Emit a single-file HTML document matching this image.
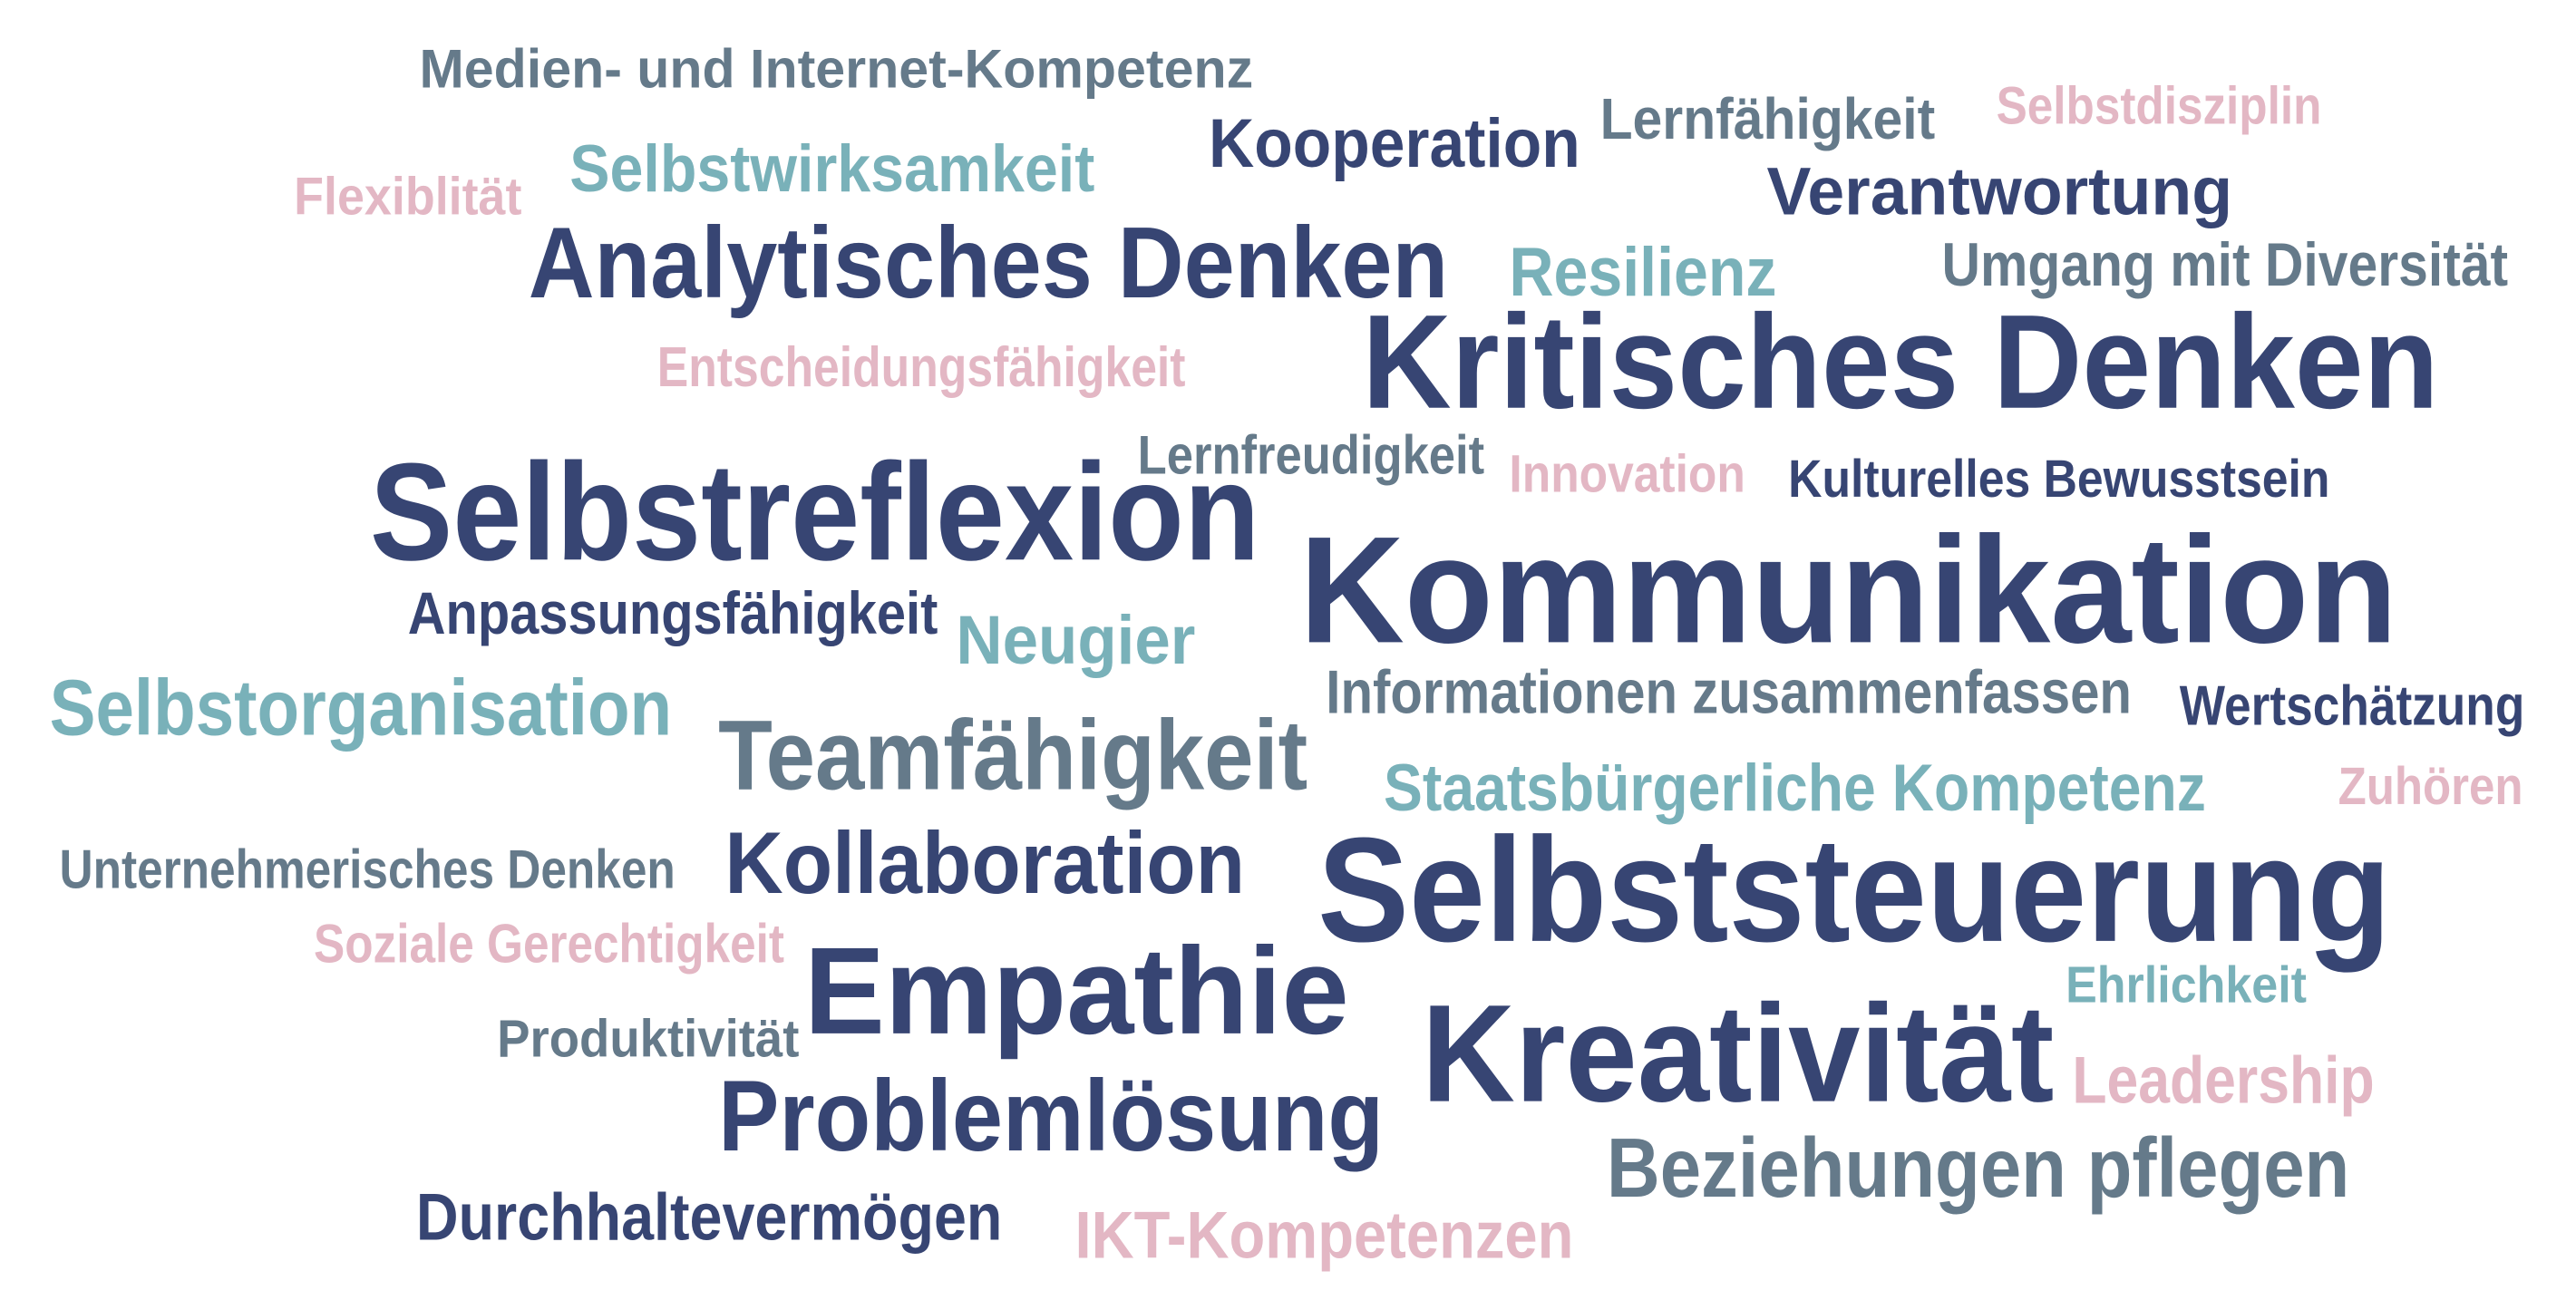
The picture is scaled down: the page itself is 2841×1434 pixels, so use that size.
<!DOCTYPE html>
<html><head><meta charset="utf-8"><style>
html,body{margin:0;padding:0;background:#fff;width:2841px;height:1434px;overflow:hidden}
svg{display:block}
text{font-family:"Liberation Sans",sans-serif;font-weight:bold}
.n{fill:#374573}.s{fill:#657a8a}.t{fill:#79b1b9}.p{fill:#e3b7c4}
</style></head><body>
<svg width="2841" height="1434" viewBox="0 0 1560.1 787.5" preserveAspectRatio="none" xmlns="http://www.w3.org/2000/svg">
<text class="s" x="254" y="53" font-size="33" textLength="505" lengthAdjust="spacingAndGlyphs">Medien- und Internet-Kompetenz</text>
<text class="n" x="732" y="101" font-size="42" textLength="225" lengthAdjust="spacingAndGlyphs">Kooperation</text>
<text class="s" x="969" y="84" font-size="35" textLength="203" lengthAdjust="spacingAndGlyphs">Lernfähigkeit</text>
<text class="p" x="1209" y="75" font-size="32" textLength="197" lengthAdjust="spacingAndGlyphs">Selbstdisziplin</text>
<text class="p" x="178" y="130" font-size="32" textLength="138" lengthAdjust="spacingAndGlyphs">Flexiblität</text>
<text class="t" x="345" y="116" font-size="40" textLength="318" lengthAdjust="spacingAndGlyphs">Selbstwirksamkeit</text>
<text class="n" x="1070" y="130" font-size="41" textLength="282" lengthAdjust="spacingAndGlyphs">Verantwortung</text>
<text class="n" x="320" y="180" font-size="61" textLength="557" lengthAdjust="spacingAndGlyphs">Analytisches Denken</text>
<text class="t" x="914" y="179" font-size="42" textLength="162" lengthAdjust="spacingAndGlyphs">Resilienz</text>
<text class="s" x="1176" y="173" font-size="37" textLength="343" lengthAdjust="spacingAndGlyphs">Umgang mit Diversität</text>
<text class="n" x="825" y="247" font-size="81" textLength="652" lengthAdjust="spacingAndGlyphs">Kritisches Denken</text>
<text class="p" x="398" y="234" font-size="34" textLength="320" lengthAdjust="spacingAndGlyphs">Entscheidungsfähigkeit</text>
<text class="s" x="689" y="287" font-size="33" textLength="210" lengthAdjust="spacingAndGlyphs">Lernfreudigkeit</text>
<text class="p" x="914" y="298" font-size="32" textLength="143" lengthAdjust="spacingAndGlyphs">Innovation</text>
<text class="n" x="1083" y="301" font-size="32" textLength="328" lengthAdjust="spacingAndGlyphs">Kulturelles Bewusstsein</text>
<text class="n" x="224" y="339" font-size="84" textLength="539" lengthAdjust="spacingAndGlyphs">Selbstreflexion</text>
<text class="n" x="787" y="389" font-size="92" textLength="665" lengthAdjust="spacingAndGlyphs">Kommunikation</text>
<text class="n" x="247" y="384" font-size="36" textLength="321" lengthAdjust="spacingAndGlyphs">Anpassungsfähigkeit</text>
<text class="t" x="579" y="402" font-size="42" textLength="145" lengthAdjust="spacingAndGlyphs">Neugier</text>
<text class="t" x="30" y="445" font-size="48" textLength="377" lengthAdjust="spacingAndGlyphs">Selbstorganisation</text>
<text class="s" x="803" y="432" font-size="37" textLength="488" lengthAdjust="spacingAndGlyphs">Informationen zusammenfassen</text>
<text class="n" x="1320" y="439" font-size="34" textLength="209" lengthAdjust="spacingAndGlyphs">Wertschätzung</text>
<text class="s" x="435" y="478" font-size="60" textLength="357" lengthAdjust="spacingAndGlyphs">Teamfähigkeit</text>
<text class="t" x="838" y="491" font-size="40" textLength="498" lengthAdjust="spacingAndGlyphs">Staatsbürgerliche Kompetenz</text>
<text class="p" x="1416" y="487" font-size="32" textLength="112" lengthAdjust="spacingAndGlyphs">Zuhören</text>
<text class="s" x="36" y="538" font-size="33" textLength="373" lengthAdjust="spacingAndGlyphs">Unternehmerisches Denken</text>
<text class="n" x="439" y="541" font-size="53" textLength="315" lengthAdjust="spacingAndGlyphs">Kollaboration</text>
<text class="n" x="798" y="570" font-size="90" textLength="650" lengthAdjust="spacingAndGlyphs">Selbststeuerung</text>
<text class="p" x="190" y="583" font-size="33" textLength="285" lengthAdjust="spacingAndGlyphs">Soziale Gerechtigkeit</text>
<text class="n" x="487" y="626" font-size="75" textLength="330" lengthAdjust="spacingAndGlyphs">Empathie</text>
<text class="t" x="1251" y="607" font-size="31" textLength="146" lengthAdjust="spacingAndGlyphs">Ehrlichkeit</text>
<text class="s" x="301" y="640" font-size="32" textLength="183" lengthAdjust="spacingAndGlyphs">Produktivität</text>
<text class="n" x="861" y="667" font-size="84" textLength="383" lengthAdjust="spacingAndGlyphs">Kreativität</text>
<text class="p" x="1255" y="668" font-size="40" textLength="183" lengthAdjust="spacingAndGlyphs">Leadership</text>
<text class="n" x="435" y="697" font-size="61" textLength="403" lengthAdjust="spacingAndGlyphs">Problemlösung</text>
<text class="s" x="973" y="725" font-size="51" textLength="450" lengthAdjust="spacingAndGlyphs">Beziehungen pflegen</text>
<text class="n" x="252" y="751" font-size="40" textLength="355" lengthAdjust="spacingAndGlyphs">Durchhaltevermögen</text>
<text class="p" x="651" y="762" font-size="40" textLength="302" lengthAdjust="spacingAndGlyphs">IKT-Kompetenzen</text>
</svg>
</body></html>
